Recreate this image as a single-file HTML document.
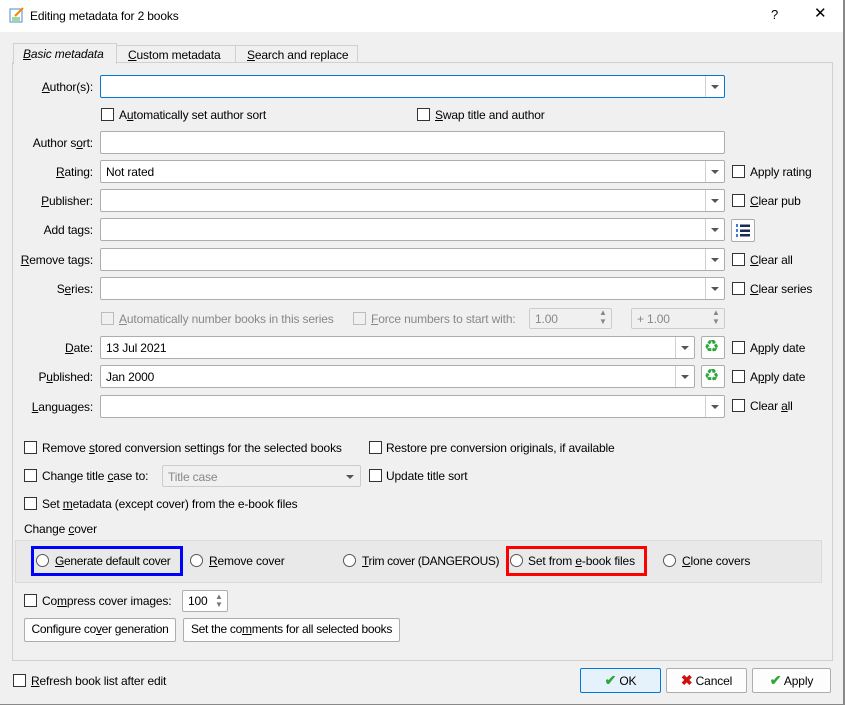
<!DOCTYPE html>
<html><head><meta charset="utf-8"><style>
*{box-sizing:border-box;margin:0;padding:0}
body{width:845px;height:705px;background:#f0f0f0;font-family:"Liberation Sans",sans-serif;font-size:12px;letter-spacing:-0.15px;color:#000;position:relative;overflow:hidden}
.a{position:absolute}
.t{position:absolute;line-height:14px;white-space:nowrap}
.r{text-align:right}
.cb{position:absolute;width:13px;height:13px;background:#fff;border:1px solid #333}
.cb.d{border-color:#bcbcbc;background:#f0f0f0}
.cmb{position:absolute;height:23px;background:#fff;border:1px solid #abadb3;border-radius:2px}
.cmb .dd{position:absolute;right:0;top:0;bottom:0;width:19px;border-left:1px solid #d0d0d0}
.cmb .dd:after{content:"";position:absolute;left:5px;top:9px;border-left:4px solid transparent;border-right:4px solid transparent;border-top:4px solid #555}
.cmb .v{position:absolute;left:5px;top:4px;line-height:14px}
.btn{position:absolute;background:#fdfdfd;border:1px solid #adadad;border-radius:2px;text-align:center;line-height:21px;white-space:nowrap}
.rad{position:absolute;width:13px;height:13px;border:1px solid #555;border-radius:50%;background:#fff}
.dis{color:#888}
</style></head><body>
<div class="a" style="left:0;top:0;width:845px;height:32px;background:#fff"></div>
<div class="a" style="right:0;top:0;width:2px;height:705px;background:#888"></div>
<div class="a" style="left:0;bottom:0;width:845px;height:1px;background:#888"></div>
<svg class="a" style="left:9px;top:7px" width="16" height="16" viewBox="0 0 16 16"><rect x="1" y="2" width="12" height="13" fill="#fff" stroke="#4a8bd1"/><line x1="3" y1="11" x2="11" y2="11" stroke="#3cb044"/><line x1="3" y1="13" x2="11" y2="13" stroke="#3cb044"/><line x1="6" y1="9" x2="14" y2="1" stroke="#f08a00" stroke-width="2"/></svg>
<div class="t" style="left:30px;top:9px">Editing metadata for 2 books</div>
<div class="t" style="left:771px;top:8px;font-size:13px">?</div>
<div class="t" style="left:814px;top:7px;font-size:15px">✕</div>

<div class="a" style="left:12px;top:62px;width:821px;height:599px;border:1px solid #d0d0d0;background:#f0f0f0"></div>
<div class="a" style="left:13px;top:43px;width:104px;height:21px;border:1px solid #d0d0d0;border-bottom:none;background:#f0f0f0"></div>
<div class="t" style="left:23px;top:47px;font-style:italic"><u>B</u>asic metadata</div>
<div class="a" style="left:116px;top:45px;width:120px;height:18px;border:1px solid #d0d0d0;background:#f0f0f0"></div>
<div class="t" style="left:128px;top:48px"><u>C</u>ustom metadata</div>
<div class="a" style="left:235px;top:45px;width:123px;height:18px;border:1px solid #d0d0d0;background:#f0f0f0"></div>
<div class="t" style="left:247px;top:48px"><u>S</u>earch and replace</div>

<div class="t r" style="right:752px;top:80px"><u>A</u>uthor(s):</div>
<div class="cmb" style="left:100px;top:75px;width:625px;border-color:#0078d7"><div class="dd"></div></div>

<div class="cb" style="left:101px;top:108px"></div><div class="t" style="left:119px;top:108px">A<u>u</u>tomatically set author sort</div>
<div class="cb" style="left:417px;top:108px"></div><div class="t" style="left:435px;top:108px"><u>S</u>wap title and author</div>

<div class="t r" style="right:752px;top:136px">Author s<u>o</u>rt:</div>
<div class="cmb" style="left:100px;top:131px;width:625px"></div>

<div class="t r" style="right:752px;top:165px"><u>R</u>ating:</div>
<div class="cmb" style="left:100px;top:160px;width:625px"><div class="v">Not rated</div><div class="dd"></div></div>
<div class="cb" style="left:732px;top:165px"></div><div class="t" style="left:750px;top:165px">Apply rating</div>

<div class="t r" style="right:752px;top:194px"><u>P</u>ublisher:</div>
<div class="cmb" style="left:100px;top:189px;width:625px"><div class="dd"></div></div>
<div class="cb" style="left:732px;top:194px"></div><div class="t" style="left:750px;top:194px"><u>C</u>lear pub</div>

<div class="t r" style="right:752px;top:223px">Add ta<u>g</u>s:</div>
<div class="cmb" style="left:100px;top:218px;width:625px"><div class="dd"></div></div>
<div class="btn" style="left:731px;top:219px;width:24px;height:23px"></div>
<svg class="a" style="left:735px;top:222px" width="16" height="16" viewBox="0 0 16 16"><g fill="#3a7be0"><rect x="1" y="2" width="2" height="3"/><rect x="1" y="7" width="2" height="3"/><rect x="1" y="12" width="2" height="3"/></g><g fill="#1a2a55"><rect x="5" y="2.5" width="10" height="2.5"/><rect x="5" y="7.5" width="10" height="2.5"/><rect x="5" y="12" width="10" height="2.5"/></g></svg>

<div class="t r" style="right:752px;top:253px"><u>R</u>emove tags:</div>
<div class="cmb" style="left:100px;top:248px;width:625px"><div class="dd"></div></div>
<div class="cb" style="left:732px;top:253px"></div><div class="t" style="left:750px;top:253px"><u>C</u>lear all</div>

<div class="t r" style="right:752px;top:282px">S<u>e</u>ries:</div>
<div class="cmb" style="left:100px;top:277px;width:625px"><div class="dd"></div></div>
<div class="cb" style="left:732px;top:282px"></div><div class="t" style="left:750px;top:282px"><u>C</u>lear series</div>

<div class="cb d" style="left:101px;top:312px"></div><div class="t dis" style="left:119px;top:312px"><u>A</u>utomatically number books in this series</div>
<div class="cb d" style="left:353px;top:312px"></div><div class="t dis" style="left:371px;top:312px"><u>F</u>orce numbers to start with:</div>
<div class="cmb" style="left:529px;top:308px;width:83px;height:21px;background:#f0f0f0;border-color:#ccc"><div class="v dis" style="top:3px">1.00</div></div>
<div class="t dis" style="left:599px;top:308px;font-size:8px;line-height:9px">▲<br>▼</div>
<div class="cmb" style="left:631px;top:308px;width:94px;height:21px;background:#f0f0f0;border-color:#ccc"><div class="v dis" style="top:3px">+ 1.00</div></div>
<div class="t dis" style="left:712px;top:308px;font-size:8px;line-height:9px">▲<br>▼</div>

<div class="t r" style="right:752px;top:341px"><u>D</u>ate:</div>
<div class="cmb" style="left:100px;top:336px;width:595px"><div class="v">13 Jul 2021</div><div class="dd"></div></div>
<div class="btn" style="left:701px;top:336px;width:24px;height:23px"></div>
<div class="t" style="left:704px;top:337px;color:#2ca83a;font-size:17px;line-height:20px">♻</div>
<div class="cb" style="left:732px;top:341px"></div><div class="t" style="left:750px;top:341px">A<u>p</u>ply date</div>

<div class="t r" style="right:752px;top:370px">P<u>u</u>blished:</div>
<div class="cmb" style="left:100px;top:365px;width:595px"><div class="v">Jan 2000</div><div class="dd"></div></div>
<div class="btn" style="left:701px;top:365px;width:24px;height:23px"></div>
<div class="t" style="left:704px;top:366px;color:#2ca83a;font-size:17px;line-height:20px">♻</div>
<div class="cb" style="left:732px;top:370px"></div><div class="t" style="left:750px;top:370px">A<u>p</u>ply date</div>

<div class="t r" style="right:752px;top:400px"><u>L</u>anguages:</div>
<div class="cmb" style="left:100px;top:395px;width:625px"><div class="dd"></div></div>
<div class="cb" style="left:732px;top:399px"></div><div class="t" style="left:750px;top:399px">Clear <u>a</u>ll</div>

<div class="cb" style="left:24px;top:441px"></div><div class="t" style="left:42px;top:441px">Remove <u>s</u>tored conversion settings for the selected books</div>
<div class="cb" style="left:369px;top:441px"></div><div class="t" style="left:386px;top:441px">Restore pre conversion originals, if available</div>

<div class="cb" style="left:24px;top:469px"></div><div class="t" style="left:42px;top:469px">Change title <u>c</u>ase to:</div>
<div class="cmb" style="left:162px;top:465px;width:199px;height:22px;background:#f0f0f0;border-color:#ccc"><div class="v dis">Title case</div><div class="dd" style="border:none"></div></div>
<div class="cb" style="left:369px;top:469px"></div><div class="t" style="left:386px;top:469px">Update title sort</div>

<div class="cb" style="left:24px;top:497px"></div><div class="t" style="left:42px;top:497px">Set <u>m</u>etadata (except cover) from the e-book files</div>

<div class="t" style="left:24px;top:522px">Change <u>c</u>over</div>
<div class="a" style="left:15px;top:540px;width:807px;height:43px;background:#e9e9e9;border:1px solid #dadada"></div>
<div class="a" style="left:31px;top:546px;width:152px;height:30px;border:3px solid #0000ff"></div>
<div class="rad" style="left:36px;top:554px"></div><div class="t" style="left:55px;top:554px;letter-spacing:-0.3px"><u>G</u>enerate default cover</div>
<div class="rad" style="left:190px;top:554px"></div><div class="t" style="left:209px;top:554px"><u>R</u>emove cover</div>
<div class="rad" style="left:343px;top:554px"></div><div class="t" style="left:362px;top:554px;letter-spacing:-0.35px"><u>T</u>rim cover (DANGEROUS)</div>
<div class="a" style="left:506px;top:546px;width:141px;height:30px;border:3px solid #ff0000"></div>
<div class="rad" style="left:510px;top:554px"></div><div class="t" style="left:528px;top:554px">Set from <u>e</u>-book files</div>
<div class="rad" style="left:663px;top:554px"></div><div class="t" style="left:682px;top:554px"><u>C</u>lone covers</div>

<div class="cb" style="left:24px;top:594px"></div><div class="t" style="left:42px;top:594px">Co<u>m</u>press cover images:</div>
<div class="cmb" style="left:182px;top:590px;width:46px;height:22px"><div class="v" style="top:3px">100</div></div>
<div class="t" style="left:215px;top:593px;font-size:8px;line-height:8px;color:#777">▲<br>▼</div>

<div class="btn" style="left:24px;top:618px;width:152px;height:24px;letter-spacing:-0.3px">Configure co<u>v</u>er generation</div>
<div class="btn" style="left:183px;top:618px;width:217px;height:24px;letter-spacing:-0.3px">Set the co<u>m</u>ments for all selected books</div>

<div class="cb" style="left:13px;top:674px"></div><div class="t" style="left:31px;top:674px"><u>R</u>efresh book list after edit</div>
<div class="btn" style="left:580px;top:668px;width:81px;height:25px;border-color:#0078d7;background:#e5f1fb;line-height:23px"><span style="color:#2ca83a;font-weight:bold;font-size:14px">✔</span> OK</div>
<div class="btn" style="left:666px;top:668px;width:81px;height:25px;line-height:23px"><span style="color:#d01010;font-weight:bold;font-size:14px">✖</span> Cancel</div>
<div class="btn" style="left:752px;top:668px;width:79px;height:25px;line-height:23px"><span style="color:#2ca83a;font-weight:bold;font-size:14px">✔</span> Apply</div>
</body></html>
